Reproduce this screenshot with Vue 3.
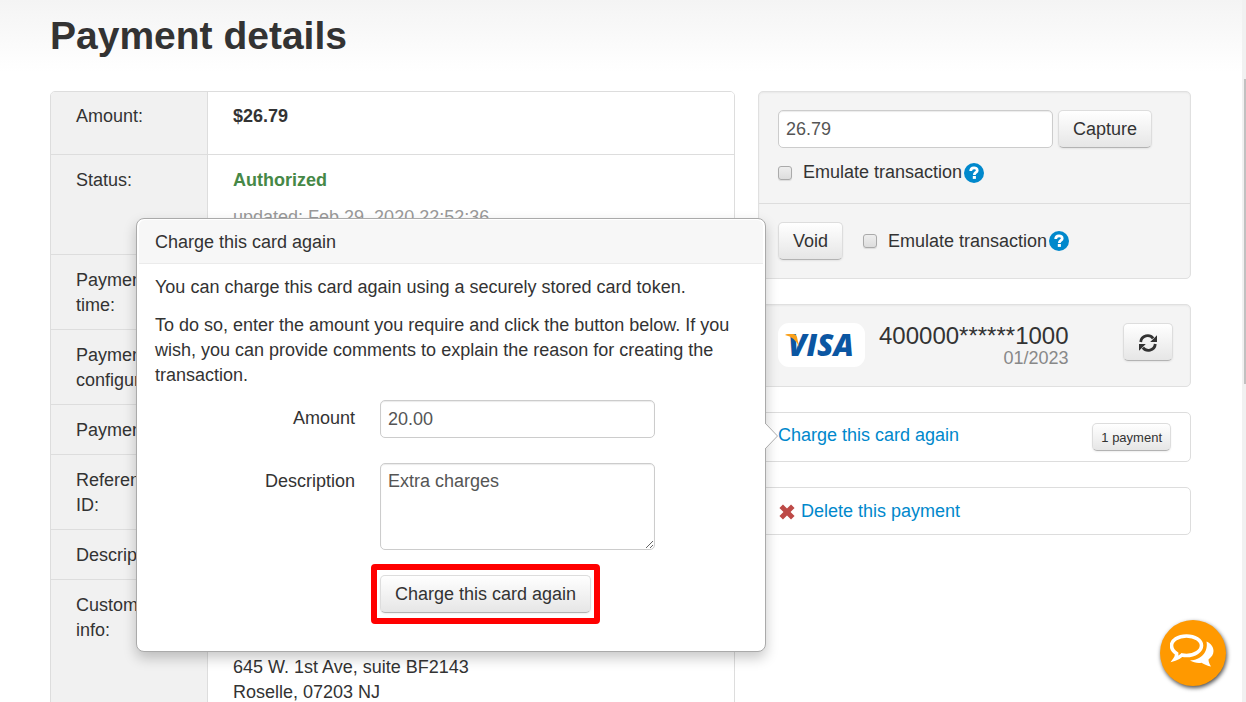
<script setup>
import { ref } from 'vue'

const captureAmount = ref('26.79')
const emulateCapture = ref(false)
const emulateVoid = ref(false)
const chargeAmount = ref('20.00')
const description = ref('Extra charges')
</script>

<template>
  <div class="page">
    <main class="content">
      <h1>Payment details</h1>
      <div class="columns">
        <table class="details">
          <tbody>
            <tr class="amount-row">
              <th scope="row">Amount:</th>
              <td><strong>$26.79</strong></td>
            </tr>
            <tr class="status-row">
              <th scope="row">Status:</th>
              <td>
                <p class="status">Authorized</p>
                <p class="updated">updated: Feb 29, 2020 22:52:36</p>
              </td>
            </tr>
            <tr>
              <th scope="row">Payment time:</th>
              <td></td>
            </tr>
            <tr>
              <th scope="row">Payment configuration:</th>
              <td></td>
            </tr>
            <tr>
              <th scope="row">Payment ID:</th>
              <td></td>
            </tr>
            <tr>
              <th scope="row">Reference ID:</th>
              <td></td>
            </tr>
            <tr>
              <th scope="row">Description:</th>
              <td></td>
            </tr>
            <tr class="customer-row">
              <th scope="row">Customer info:</th>
              <td>
                <address>645 W. 1st Ave, suite BF2143<br />Roselle, 07203 NJ</address>
              </td>
            </tr>
          </tbody>
        </table>

        <aside class="side">
          <section class="panel well">
            <div class="capture">
              <div class="capture-line">
                <input v-model="captureAmount" class="field" type="text" aria-label="Amount to capture" />
                <button class="btn" type="button">Capture</button>
              </div>
              <div class="check-line">
                <label class="check">
                  <input v-model="emulateCapture" type="checkbox" />
                  Emulate transaction
                </label>
                <svg class="help" viewBox="0 0 20 20" aria-hidden="true">
                  <circle cx="10" cy="10" r="10" />
                  <path class="mark" d="M6.700 8 C6.700 3.900 13.200 3.900 13.200 7.400 C13.200 9.600 10.300 9.400 10.300 12" />
                  <rect class="dot" x="8.800" y="13" width="3.100" height="2.900" />
                </svg>
              </div>
            </div>
            <div class="void">
              <button class="btn" type="button">Void</button>
              <div class="check-line">
                <label class="check">
                  <input v-model="emulateVoid" type="checkbox" />
                  Emulate transaction
                </label>
                <svg class="help" viewBox="0 0 20 20" aria-hidden="true">
                  <circle cx="10" cy="10" r="10" />
                  <path class="mark" d="M6.700 8 C6.700 3.900 13.200 3.900 13.200 7.400 C13.200 9.600 10.300 9.400 10.300 12" />
                  <rect class="dot" x="8.800" y="13" width="3.100" height="2.900" />
                </svg>
              </div>
            </div>
          </section>

          <section class="panel well card">
            <svg class="visa" viewBox="0 0 87 44" role="img" aria-label="Visa">
              <rect width="87" height="44" rx="11" fill="#fff" />
              <text x="10" y="33" class="visa-name">VISA</text>
              <path d="M7 12 Q8 11 10 11 H15 Q18 11 19 14 L21 24 Q17 14 7 12 Z" fill="#f9a01b" />
            </svg>
            <div class="card-data">
              <div class="number">400000******1000</div>
              <div class="expiry">01/2023</div>
            </div>
            <button class="btn refresh" type="button" aria-label="Refresh card">
              <svg viewBox="0 0 18 18" aria-hidden="true">
                <path class="arc" d="M1.700 8 C2.400 1.100 10.800 -.1 14.100 4.400 M16.300 10 C15.600 16.900 7.200 18.100 3.900 13.600" />
                <path class="tip" d="M18 1.200 V8 H11.200 Z M0 16.800 V10 H6.800 Z" />
              </svg>
            </button>
          </section>

          <section class="panel recharge">
            <a href="#charge">Charge this card again</a>
            <button class="btn small" type="button">1 payment</button>

            <div id="charge" class="popover" role="dialog" aria-labelledby="charge-title">
              <svg class="pointer" viewBox="0 0 13 28" aria-hidden="true">
                <path d="M0 1 L12.500 14 L0 27" />
              </svg>
              <h2 id="charge-title">Charge this card again</h2>
              <form class="popover-body" @submit.prevent>
                <p>You can charge this card again using a securely stored card token.</p>
                <p>
                  To do so, enter the amount you require and click the button below. If you wish, you
                  can provide comments to explain the reason for creating the transaction.
                </p>
                <div class="form-row">
                  <label for="amount">Amount</label>
                  <input id="amount" v-model="chargeAmount" class="field" type="text" />
                </div>
                <div class="form-row">
                  <label for="description">Description</label>
                  <textarea id="description" v-model="description" class="field"></textarea>
                </div>
                <div class="submit">
                  <button class="btn" type="submit">Charge this card again</button>
                </div>
              </form>
            </div>
          </section>

          <section class="panel delete">
            <svg viewBox="0 0 16 16" aria-hidden="true">
              <path d="M2.200 2.200 L13.800 13.800 M13.800 2.200 L2.200 13.800" />
            </svg>
            <a href="#delete">Delete this payment</a>
          </section>
        </aside>
      </div>
    </main>

    <div class="scroll-track"><div class="scroll-thumb"></div></div>

    <button class="chat" type="button" aria-label="Open chat">
      <svg viewBox="0 0 46 36" aria-hidden="true">
        <path
          class="back"
          d="M36.500 7.500 C41 9.500 43.500 13 43.500 17 C43.500 20.500 41.500 23 38.500 25.500 C38.500 28 39.500 30 41 32.500 C37.500 32 34.500 30.500 31.500 28.800 C27.500 29.500 23.500 28.500 20 26.500 C31 26 38.500 18 36.500 7.500 Z"
        />
        <path
          class="front"
          d="M16.500 2 C25 2 31.500 6.300 31.500 11.500 C31.500 16.700 25 21.500 16.500 21.500 C14.800 21.500 13.300 21.300 12 21 C10 22.800 7.800 24.200 5 25 C6.300 23.200 6.800 21.500 6.600 19.500 C3.500 17.500 1.500 14.800 1.500 11.500 C1.500 6.300 8 2 16.500 2 Z"
        />
      </svg>
    </button>
  </div>
</template>

<style>
body {
  margin: 0;
}
</style>

<style scoped>
.page {
  display: grid;
  grid-template-columns: 1fr 4px;
  height: 100vh;
  overflow: hidden;
  color: #333;
  font: 18px/25px "Liberation Sans", Arial, sans-serif;
  background: linear-gradient(#f4f4f4, #fff 72px);
}
.page *,
.page *::before {
  box-sizing: border-box;
}
.content {
  min-width: 0;
  padding: 11px 51px 0 50px;
}
h1 {
  margin: 0 0 30px;
  font-size: 39px;
  line-height: 50px;
}
.columns {
  display: grid;
  grid-template-columns: 685fr 433fr;
  gap: 23px;
  align-items: start;
}
a {
  color: #08c;
  text-decoration: none;
}
p {
  margin: 0 0 13px;
}

.details {
  width: 100%;
  border: 1px solid #ddd;
  border-radius: 5px;
  border-spacing: 0;
  table-layout: fixed;
}
.details th,
.details td {
  padding: 12px 25px;
  vertical-align: top;
  text-align: left;
  font-weight: normal;
}
.details th {
  width: 156px;
  background: #f1f1f1;
}
.details td {
  border-left: 1px solid #ddd;
  background: #fff;
}
.details tr:first-child th {
  border-radius: 4px 0 0 0;
}
.details tr:first-child td {
  border-radius: 0 4px 0 0;
}
.details tr + tr > * {
  padding: 13px 25px 11px;
  border-top: 1px solid #ddd;
}
.details td strong {
  font-weight: bold;
}
.amount-row {
  height: 62px;
}
.status-row {
  height: 100px;
}
.status {
  color: #468847;
  font-weight: bold;
  margin-bottom: 12px;
}
.updated {
  color: #999;
  margin: 0;
}
.customer-row {
  height: 200px;
}
.details tr.customer-row > td {
  padding-top: 75px;
}
address {
  font-style: normal;
}

.side {
  display: grid;
  gap: 25px;
  min-width: 0;
}
.panel {
  border: 1px solid #ddd;
  border-radius: 5px;
  background: #fff;
}
.well {
  background: #f4f4f4;
  border-color: #e0e0e0;
  box-shadow: inset 0 1px 2px rgba(0, 0, 0, 0.05);
}
.capture {
  padding: 18px 19px;
  border-bottom: 1px solid #ddd;
}
.capture-line {
  display: flex;
  gap: 5px;
  margin-bottom: 12px;
}
.void {
  display: flex;
  align-items: center;
  gap: 20px;
  padding: 18px 19px;
}
.check-line {
  display: flex;
  align-items: center;
  gap: 2px;
}
.check {
  display: flex;
  align-items: center;
  gap: 11px;
}
.check input {
  appearance: none;
  width: 14px;
  height: 14px;
  margin: 0;
  border: 1px solid #aaa;
  border-radius: 3px;
  background: linear-gradient(#eee, #ddd);
  box-shadow: 0 1px 1px rgba(0, 0, 0, 0.1);
}
.check input:checked {
  background: #08c;
}
.help {
  width: 20px;
  height: 20px;
}
.help circle {
  fill: #08c;
}
.mark {
  fill: none;
  stroke: #fff;
  stroke-width: 2.8;
}
.dot {
  fill: #fff;
}
.field {
  display: block;
  width: 275px;
  height: 38px;
  margin: 0;
  padding: 5px 7px;
  border: 1px solid #ccc;
  border-radius: 5px;
  background: #fff;
  box-shadow: inset 0 1px 1px rgba(0, 0, 0, 0.08);
  color: #555;
  font: inherit;
}
textarea.field {
  height: 87px;
}
.btn {
  height: 38px;
  padding: 0 14px;
  border: 1px solid #ddd;
  border-bottom-color: #b3b3b3;
  border-radius: 5px;
  background: linear-gradient(#fff, #e6e6e6);
  box-shadow: 0 1px 2px rgba(0, 0, 0, 0.07);
  color: #333;
  font: inherit;
  white-space: nowrap;
}

.card {
  display: flex;
  align-items: flex-start;
  padding: 18px 17px 18px 19px;
}
.visa {
  width: 87px;
  height: 44px;
}
.visa-name {
  fill: #0b56a2;
  font: italic 800 30px "Open Sans", sans-serif;
}
.card-data {
  margin-left: 14px;
  text-align: right;
}
.number {
  font-size: 24px;
}
.expiry {
  color: #888;
  line-height: 20px;
}
.refresh {
  width: 50px;
  margin-left: auto;
}
.refresh svg {
  display: block;
  width: 18px;
  height: 18px;
  margin: 2px auto 0;
}
.arc {
  fill: none;
  stroke: #333;
  stroke-width: 2.8;
}
.tip {
  fill: #333;
}

.recharge {
  position: relative;
  display: flex;
  align-items: flex-start;
  justify-content: space-between;
  padding: 10px 19px;
}
.small {
  height: 28px;
  padding: 0 8px;
  font-size: 13px;
}
.delete {
  display: flex;
  align-items: center;
  gap: 6px;
  padding: 11px 20px 10px;
}
.delete svg {
  width: 16px;
  height: 16px;
}
.delete path {
  fill: none;
  stroke: #bd4a47;
  stroke-width: 5;
}

.popover {
  position: absolute;
  top: -195px;
  right: calc(100% - 7px);
  width: 630px;
  padding: 1px 2px;
  border: 1px solid #aaa;
  border-radius: 8px;
  background: #fff;
  box-shadow: 0 6px 13px rgba(0, 0, 0, 0.22);
}
.popover h2 {
  margin: 0;
  padding: 10px 16px 8px;
  border-bottom: 1px solid #ebebeb;
  border-radius: 6px 6px 0 0;
  background: #f7f7f7;
  font-size: 18px;
  font-weight: normal;
  line-height: 25px;
}
.popover-body {
  padding: 11px 16px 26px;
}
.popover-body p + p {
  margin-bottom: 12px;
}
.pointer {
  position: absolute;
  top: 203px;
  left: 100%;
  width: 13px;
  height: 28px;
}
.pointer path {
  fill: #fff;
  stroke: #aaa;
}
.form-row {
  display: grid;
  grid-template-columns: 200px 275px;
  gap: 25px;
  margin-bottom: 25px;
}
.form-row label {
  padding-top: 6px;
  text-align: right;
}
.form-row + .form-row {
  margin-bottom: 14px;
}
.submit {
  width: fit-content;
  margin-left: 216px;
  padding: 5px 3px;
  border: 6px solid #f00;
  border-radius: 4px;
}
.submit .btn {
  display: block;
}

.scroll-track {
  padding: 79px 0 0 2px;
  background: #f1f1f1;
}
.scroll-thumb {
  height: 305px;
  background: #c1c1c1;
}
.chat {
  position: fixed;
  right: 20px;
  bottom: 16px;
  display: grid;
  place-items: center;
  width: 66px;
  height: 66px;
  padding: 0 0 3px;
  border: 0;
  border-radius: 50%;
  background: #f90;
  box-shadow: 1px 2px 4px rgba(0, 0, 0, 0.7);
}
.chat svg {
  width: 46px;
  height: 36px;
}
.back {
  fill: #fff;
}
.front {
  fill: none;
  stroke: #fff;
  stroke-width: 3.6;
}
</style>
